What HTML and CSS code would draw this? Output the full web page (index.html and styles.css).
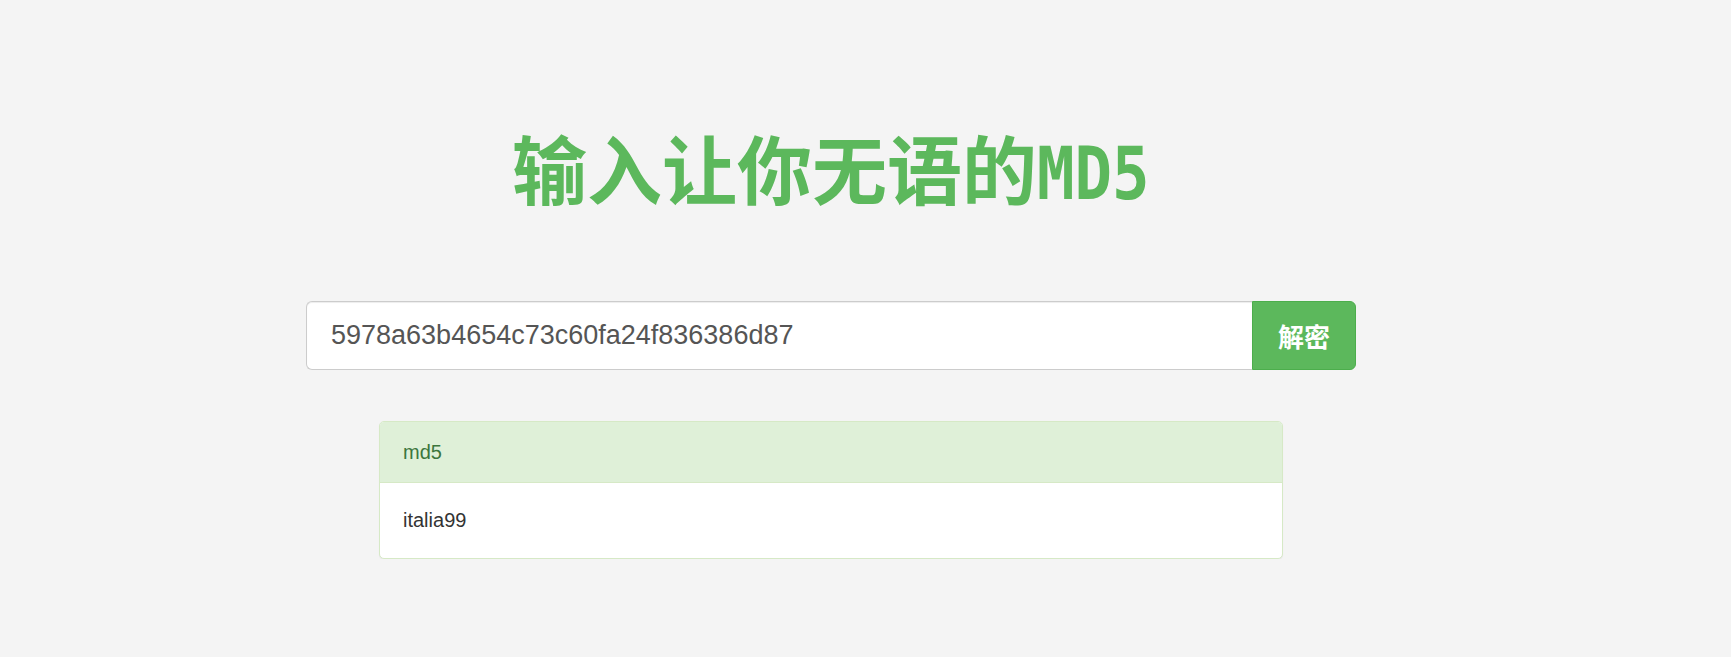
FILE: index.html
```html
<!DOCTYPE html>
<html lang="zh-CN">
<head>
<meta charset="utf-8">
<title>输入让你无语的MD5</title>
<link rel="stylesheet" href="styles.css">
</head>
<body>
<main class="page">
  <h1 class="title">输入让你无语的<span class="title-latin">MD5</span></h1>
  <form class="search" onsubmit="return false">
    <input class="search-input" type="text" value="5978a63b4654c73c60fa24f836386d87">
    <button class="search-btn" type="submit">解密</button>
  </form>
  <section class="result">
    <div class="result-head">md5</div>
    <div class="result-body">italia99</div>
  </section>
</main>
</body>
</html>
```
FILE: styles.css
```css
html, body {
  margin: 0;
  padding: 0;
  background: #f4f4f4;
}
body {
  font-family: "Liberation Sans", Arial, "Noto Sans CJK SC", sans-serif;
  color: #333;
}
.page {
  width: 1050px;
  margin-left: 306px;
  padding-top: 122px;
}
.title {
  margin: 0 0 89px;
  font-family: "Noto Sans CJK SC", sans-serif;
  font-weight: 700;
  font-size: 75px;
  line-height: 90px;
  color: #5cb85c;
  text-align: center;
  white-space: nowrap;
}
.title-latin {
  display: inline-block;
  font-family: "DejaVu Sans Mono", monospace;
  font-weight: 700;
  font-size: 73px;
  line-height: 1;
  transform: scaleX(0.854);
  transform-origin: left center;
  margin-right: -19px;
}
.search {
  display: flex;
  height: 69px;
  margin: 0 0 51px;
}
.search-input {
  flex: 1;
  min-width: 0;
  box-sizing: border-box;
  height: 69px;
  margin: 0;
  padding: 0 24px;
  border: 1px solid #ccc;
  border-right: none;
  border-radius: 6px 0 0 6px;
  background: #fff;
  box-shadow: inset 0 1px 1px rgba(0,0,0,.075);
  font-family: "Liberation Sans", Arial, sans-serif;
  font-size: 27px;
  color: #555;
  outline: none;
}
.search-btn {
  width: 104px;
  box-sizing: border-box;
  height: 69px;
  margin: 0;
  padding: 0;
  border: 1px solid #4cae4c;
  border-radius: 0 6px 6px 0;
  background: #5cb85c;
  color: #fff;
  font-family: "Noto Sans CJK SC", sans-serif;
  font-weight: 700;
  font-size: 26px;
  cursor: pointer;
}
.result {
  width: 904px;
  margin: 0 auto;
  box-sizing: border-box;
  border: 1px solid #d6e9c6;
  border-radius: 5px;
  background: #fff;
  box-shadow: 0 1px 1px rgba(0,0,0,.05);
  overflow: hidden;
  font-size: 20px;
  line-height: 27px;
}
.result-head {
  padding: 17px 23px 16px;
  background: #dff0d8;
  color: #3c763d;
  border-bottom: 1px solid #d6e9c6;
}
.result-body {
  padding: 24px 23px 24px;
  color: #333;
}
```
